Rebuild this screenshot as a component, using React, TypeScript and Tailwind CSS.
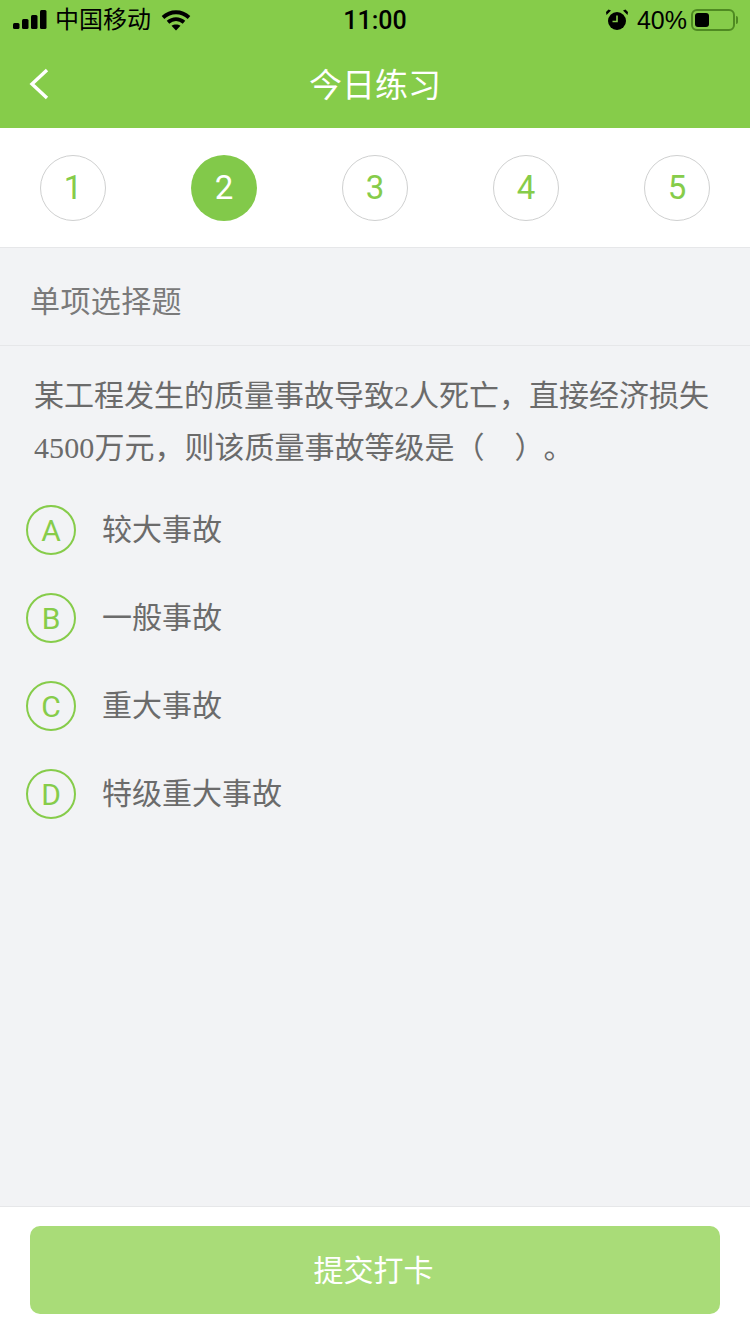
import React from "react";

const steps = [1, 2, 3, 4, 5];

const options = [
  { key: "A", text: "较大事故" },
  { key: "B", text: "一般事故" },
  { key: "C", text: "重大事故" },
  { key: "D", text: "特级重大事故" },
];

function StatusBar() {
  return (
    <div className="flex h-10 items-center justify-between text-black">
      <div className="flex w-[250px] items-center pl-[13px]">
        <svg width="34" height="20" viewBox="0 0 34 20" fill="currentColor">
          <rect x="0" y="13" width="6.5" height="6" rx="1.5" />
          <rect x="9" y="9" width="6.5" height="10" rx="1.5" />
          <rect x="18" y="5" width="6.5" height="14" rx="1.5" />
          <rect x="27" y="0" width="6.5" height="19" rx="1.5" />
        </svg>
        <span className="ml-2 text-[24px] leading-none">中国移动</span>
        <svg className="ml-[10px]" width="30" height="22" viewBox="0 0 30 22" fill="none" stroke="currentColor">
          <path d="M2 8.5C9.5 1.5 20.5 1.5 28 8.5" strokeWidth="3.8" />
          <path d="M7 13.2C11.8 9 18.2 9 23 13.2" strokeWidth="3.8" />
          <path d="M10.5 16.8 15 21.5 19.5 16.8C17 15 13 15 10.5 16.8Z" fill="currentColor" stroke="none" />
        </svg>
      </div>
      <span className="font-['Roboto',sans-serif] text-[25px] font-medium leading-none">11:00</span>
      <div className="flex w-[250px] items-center justify-end pr-[15px]">
        <svg width="24" height="24" viewBox="0 0 24 24" fill="currentColor">
          <circle cx="12" cy="13" r="9" />
          <path d="M1.5 7 6 2.5 3.5 1.5 1 4Z M22.5 7 18 2.5 20.5 1.5 23 4Z" />
          <path d="M12 7.5V13.5H7.5" stroke="#86cc4a" strokeWidth="1.6" fill="none" />
        </svg>
        <span className="ml-[8px] font-['Liberation_Sans',sans-serif] text-[25px] leading-none">40%</span>
        <div className="relative ml-[4px] flex h-[22px] w-[44px] items-center rounded-[6px] border-2 border-[#4f8a22] p-[2px]">
          <div className="h-[14px] w-[14px] rounded-[3px] bg-black" />
          <div className="absolute right-[-5px] top-[5px] h-[8px] w-[2px] rounded-r bg-[#4f8a22]" />
        </div>
      </div>
    </div>
  );
}

export default function App() {
  return (
    <div className="flex h-[1334px] w-[750px] flex-col overflow-hidden bg-[#f2f3f5] font-['Roboto','Noto_Sans_CJK_SC',sans-serif]">
      <header className="h-[128px] bg-[#86cc4a]">
        <StatusBar />
        <div className="relative flex h-[88px] items-center justify-center pt-[3px]">
          <svg className="absolute left-[28px] top-[27px]" width="22" height="34" viewBox="0 0 22 34" fill="none" stroke="white" strokeWidth="3.4">
            <path d="M19 3 4 17 19 31" />
          </svg>
          <span className="text-[33px] leading-none text-white">今日练习</span>
        </div>
      </header>

      <div className="flex h-[120px] items-start justify-between border-b border-[#e6e7e9] bg-white px-10 pt-[27px]">
        {steps.map((n) =>
          n === 2 ? (
            <div key={n} className="flex h-[66px] w-[66px] items-center justify-center rounded-full bg-[#82c94a] text-[33px] text-white">
              {n}
            </div>
          ) : (
            <div key={n} className="flex h-[66px] w-[66px] items-center justify-center rounded-full border border-[#cfd0d0] text-[33px] text-[#86cc4a]">
              {n}
            </div>
          )
        )}
      </div>

      <div className="flex h-[98px] items-center border-b border-[#e6e7e9] pl-[30px] pt-[10px] text-[30px] tracking-[0.4px] text-[#7a7a7a]">
        单项选择题
      </div>

      <p className="px-[34px] pt-[24px] font-['Liberation_Serif','Noto_Sans_CJK_SC',serif] text-[30px] leading-[52px] text-[#6b6b6b]">
        <span className="font-['Noto_Sans_CJK_SC',sans-serif] leading-none">某工程发生的质量事故导致</span>2<span className="font-['Noto_Sans_CJK_SC',sans-serif] leading-none">人死亡，直接经济损失</span>
        <br />
        <span className="tracking-[0.1px]">4500</span><span className="font-['Noto_Sans_CJK_SC',sans-serif] leading-none">万元，则该质量事故等级是（　）</span><span className="ml-[14px] font-['Noto_Sans_CJK_SC',sans-serif] leading-none">。</span>
      </p>

      <div className="flex flex-col gap-[38px] pl-[26px] pt-[31px]">
        {options.map((o) => (
          <div key={o.key} className="flex h-[50px] items-center">
            <div className="flex h-[50px] w-[50px] items-center justify-center rounded-full border-2 border-[#86cc4a] pt-[1px] text-[30px] text-[#86cc4a]">
              {o.key}
            </div>
            <span className="ml-[26px] text-[30px] leading-none text-[#6b6b6b]">{o.text}</span>
          </div>
        ))}
      </div>

      <footer className="mt-auto h-[128px] border-t border-[#e6e7e9] bg-white px-[30px] pt-[19px]">
        <button className="flex h-[88px] w-full items-center justify-center rounded-[10px] bg-[#a9dc78] pr-[3px] text-[30px] text-white">
          提交打卡
        </button>
      </footer>
    </div>
  );
}
